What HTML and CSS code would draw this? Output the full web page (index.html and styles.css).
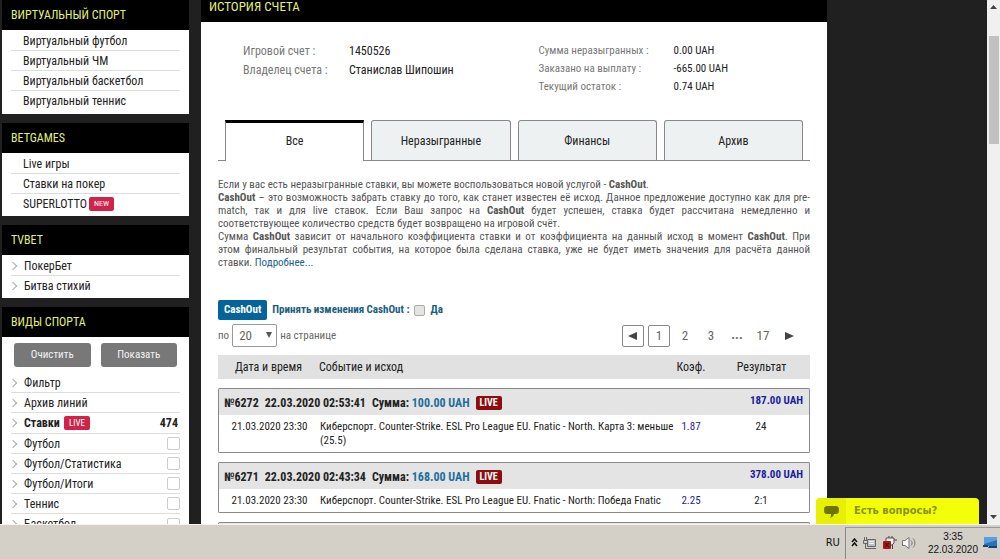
FILE: index.html
```html
<!DOCTYPE html>
<html lang="ru">
<head>
<meta charset="utf-8">
<title>История счета</title>
<link rel="stylesheet" href="styles.css">
</head>
<body>
<div class="browser">
  <div class="page">
    <nav class="sidebar">
      <section class="block">
        <h2 class="block-title">ВИРТУАЛЬНЫЙ СПОРТ</h2>
        <ul class="menu">
          <li><a href="#">Виртуальный футбол</a></li>
          <li><a href="#">Виртуальный ЧМ</a></li>
          <li><a href="#">Виртуальный баскетбол</a></li>
          <li><a href="#">Виртуальный теннис</a></li>
        </ul>
      </section>
      <section class="block">
        <h2 class="block-title">BETGAMES</h2>
        <ul class="menu">
          <li><a href="#">Live игры</a></li>
          <li><a href="#">Ставки на покер</a></li>
          <li><a href="#">SUPERLOTTO</a><span class="tag tag-new">NEW</span></li>
        </ul>
      </section>
      <section class="block">
        <h2 class="block-title">TVBET</h2>
        <ul class="menu arrows">
          <li><a href="#">ПокерБет</a></li>
          <li><a href="#">Битва стихий</a></li>
        </ul>
      </section>
      <section class="block">
        <h2 class="block-title">ВИДЫ СПОРТА</h2>
        <div class="buttons">
          <button type="button">Очистить</button>
          <button type="button">Показать</button>
        </div>
        <ul class="menu arrows">
          <li><a href="#">Фильтр</a></li>
          <li><a href="#">Архив линий</a></li>
          <li class="strong"><a href="#">Ставки</a><span class="tag">LIVE</span><span class="count">474</span></li>
          <li><label for="s1">Футбол</label><input type="checkbox" id="s1"></li>
          <li><label for="s2">Футбол/Статистика</label><input type="checkbox" id="s2"></li>
          <li><label for="s3">Футбол/Итоги</label><input type="checkbox" id="s3"></li>
          <li><label for="s4">Теннис</label><input type="checkbox" id="s4"></li>
          <li><label for="s5">Баскетбол</label><input type="checkbox" id="s5"></li>
        </ul>
      </section>
    </nav>

    <main class="content">
      <h1 class="title">ИСТОРИЯ СЧЕТА</h1>
      <div class="inner">
        <div class="account">
          <dl class="info owner">
            <dt>Игровой счет :</dt><dd>1450526</dd>
            <dt>Владелец счета :</dt><dd>Станислав Шипошин</dd>
          </dl>
          <dl class="info sums">
            <dt>Сумма неразыгранных :</dt><dd>0.00 UAH</dd>
            <dt>Заказано на выплату :</dt><dd>-665.00 UAH</dd>
            <dt>Текущий остаток :</dt><dd>0.74 UAH</dd>
          </dl>
        </div>
        <div class="tabs">
          <button type="button" class="tab active">Все</button>
          <button type="button" class="tab">Неразыгранные</button>
          <button type="button" class="tab">Финансы</button>
          <button type="button" class="tab">Архив</button>
        </div>
        <div class="note">
          <p>Если у вас есть неразыгранные ставки, вы можете воспользоваться новой услугой - <b>CashOut</b>.</p>
          <p><b>CashOut</b> – это возможность забрать ставку до того, как станет известен её исход. Данное предложение доступно как для pre-match, так и для live ставок. Если Ваш запрос на <b>CashOut</b> будет успешен, ставка будет рассчитана немедленно и соответствующее количество средств будет возвращено на игровой счёт.</p>
          <p>Сумма <b>CashOut</b> зависит от начального коэффициента ставки и от коэффициента на данный исход в момент <b>CashOut</b>. При этом&nbsp;финальный результат события, на которое была сделана ставка, уже не будет иметь значения для расчёта данной ставки.&nbsp;<a href="#">Подробнее...</a></p>
        </div>
        <div class="cashout">
          <button type="button" class="cash-btn">CashOut</button>
          <span>Принять изменения CashOut :</span>
          <input type="checkbox" id="yes"><label for="yes">Да</label>
        </div>
        <div class="pager">
          <div class="per-page">
            <label for="per">по</label>
            <span class="select"><select id="per"><option>20</option></select></span>
            <span>на странице</span>
          </div>
          <div class="pages">
            <button type="button" class="boxed" aria-label="Назад"><svg width="10" height="8" viewBox="0 0 10 8"><path d="M9 0v8L0 4z"/></svg></button>
            <button type="button" class="boxed">1</button>
            <button type="button">2</button>
            <button type="button">3</button>
            <b>...</b>
            <button type="button">17</button>
            <button type="button" aria-label="Вперед"><svg width="10" height="8" viewBox="0 0 10 8"><path d="M1 0v8l9-4z"/></svg></button>
          </div>
        </div>
        <table class="bets">
          <colgroup><col class="c-date"><col><col class="c-coef"><col class="c-res"></colgroup>
          <thead>
            <tr><th>Дата и время</th><th>Событие и исход</th><th>Коэф.</th><th>Результат</th></tr>
          </thead>
          <tbody>
            <tr class="gap"><td colspan="4"></td></tr>
            <tr class="head"><td colspan="4"><div class="head-row"><b>№6272</b><b>22.03.2020 02:53:41</b><b>Сумма: <span class="sum">100.00 UAH</span></b><span class="live">LIVE</span><b class="win">187.00 UAH</b></div></td></tr>
            <tr class="data"><td>21.03.2020 23:30</td><td>Киберспорт. Counter-Strike. ESL Pro League EU. Fnatic - North. Карта 3: меньше (25.5)</td><td>1.87</td><td>24</td></tr>
          </tbody>
          <tbody>
            <tr class="gap"><td colspan="4"></td></tr>
            <tr class="head"><td colspan="4"><div class="head-row"><b>№6271</b><b>22.03.2020 02:43:34</b><b>Сумма: <span class="sum">168.00 UAH</span></b><span class="live">LIVE</span><b class="win">378.00 UAH</b></div></td></tr>
            <tr class="data"><td>21.03.2020 23:30</td><td>Киберспорт. Counter-Strike. ESL Pro League EU. Fnatic - North: Победа Fnatic</td><td>2.25</td><td>2:1</td></tr>
          </tbody>
          <tbody>
            <tr class="gap"><td colspan="4"></td></tr>
            <tr class="head"><td colspan="4"></td></tr>
          </tbody>
        </table>
      </div>
    </main>
  </div>
  <div class="scrollbar">
    <svg width="7" height="4" viewBox="0 0 7 4"><path d="M0 4h7L3.500 0z"/></svg>
    <div class="thumb"></div>
    <svg width="7" height="4" viewBox="0 0 7 4"><path d="M0 0h7L3.500 4z"/></svg>
  </div>
  <button type="button" class="chat">
    <span class="chat-icon"><svg width="15" height="13" viewBox="0 0 15 13"><path d="M3 1h9c2 0 3 1 3 4s-1 4-3 4h-2c0 2-2 3-4 4 1-1 1-3 1-4H3C1 9 0 8 0 5s1-4 3-4z"/></svg></span>
    <span>Есть вопросы?</span>
  </button>
</div>
<footer class="taskbar">
  <span class="lang">RU</span>
  <div class="tray">
    <svg width="7" height="9" viewBox="0 0 7 9" fill="none" stroke="#111" stroke-width="1.500"><path d="M1 4l2.500-3L6 4M1 8l2.500-3L6 8"/></svg>
    <svg width="14" height="14" viewBox="0 0 14 14" fill="none" stroke="#666"><path d="M4.500 3.500h8v7h-8z" fill="#b9bebe"/><path d="M5 12.500h8M1.500 1v3M3.500 1v3M.5 4.500h4v3h-4zM2.500 8v4.500H5"/><path d="M6 5.500h5M6 7.500h5" stroke="#f4f4f4"/></svg>
    <svg width="15" height="14" viewBox="0 0 15 14" fill="none"><path d="M4 2h8v5l-2 2H5L4 7z" fill="#eee" stroke="#555"/><path d="M7 0v2M10 0v2M12 4h3M10.500 9v4" stroke="#444"/><rect x="1" y="5" width="8" height="8" rx="1" fill="#b41414"/><path d="M3 7l4 4M7 7l-4 4" stroke="#421" stroke-width="1.500"/></svg>
    <svg width="15" height="14" viewBox="0 0 15 14" fill="none" stroke="#777"><path d="M.5 4.500H3l4-3v11l-4-3H.5z" fill="#f5f5f5"/><path d="M9 4.500c1.500 1.500 1.500 3.500 0 5M11 2.500c2.500 2.500 2.500 6.500 0 9"/></svg>
    <div class="clock"><span>3:35</span><span>22.03.2020</span></div>
    <svg width="14" height="13" viewBox="0 0 14 13"><path d="M1 1h13v9H1z" fill="#2a72b8"/><path d="M1 1h13v3L1 8z" fill="#5b9edb"/><path d="M6 10h8v2H5zM0 9h5v2H0z" fill="#174477"/></svg>
  </div>
</footer>
</body>
</html>
```
FILE: styles.css
```css
* { box-sizing: border-box; }
body {
  margin: 0;
  height: 100vh;
  overflow: hidden;
  display: flex;
  flex-direction: column;
  background: #202020;
  font: 12px/20px "Roboto Condensed", Roboto, "Liberation Sans", sans-serif;
  color: #222;
}
h1, h2, ul, dl, dd, p { margin: 0; padding: 0; }
ul { list-style: none; }
button, input, select { font: inherit; color: inherit; margin: 0; padding: 0; }
a { color: inherit; text-decoration: none; }

.browser { position: relative; flex: 1; min-height: 0; display: flex; }
.page {
  flex: 1;
  min-width: 0;
  overflow: hidden;
  display: grid;
  grid-template-columns: 187px minmax(0, 1fr);
  column-gap: 12px;
  padding: 0 16% 0 2px;
  align-items: start;
}

.sidebar { display: flex; flex-direction: column; gap: 9px; }
.block { background: #fff; padding-bottom: 2px; }
.block:first-child { padding-bottom: 3px; }
.block-title {
  background: #000;
  color: #e3ef7c;
  font-size: 12px;
  font-weight: 400;
  line-height: 30px;
  padding-left: 9px;
}
.menu { padding: 1px 9px 0; }
.menu li {
  display: flex;
  align-items: center;
  height: 20px;
  padding-left: 12px;
  border-bottom: 1px solid #ddd;
}
.menu li:last-child { border-bottom: 0; }
.arrows li { padding-left: 0; }
.arrows li::before {
  content: "";
  width: 5px;
  height: 5px;
  margin-right: 8px;
  border: solid #aaa;
  border-width: 1px 1px 0 0;
  transform: rotate(45deg);
  margin-left: -1px;
}
.menu .strong { font-weight: 700; height: 21px; }
.menu input {
  appearance: none;
  width: 13px;
  height: 13px;
  margin-left: auto;
  border: 1px solid #ccc;
  border-radius: 2px;
  background: #fff;
}
.tag {
  margin-left: 4px;
  padding: 0 5px;
  border-radius: 2px;
  background: #ce2449;
  color: #fff;
  font-size: 9px;
  font-weight: 400;
  line-height: 14px;
}
.tag-new { margin-left: 2px; font-size: 8px; }
.count { margin-left: auto; padding-right: 2px; }
.buttons { display: grid; grid-template-columns: 1fr 1fr; gap: 10px; padding: 6px 12px 5px; }
.buttons button {
  height: 24px;
  border: 0;
  border-radius: 3px;
  background: #787878;
  color: #f2f2f2;
  font-size: 11px;
}

.content { background: #fff; min-height: 100vh; }
.title {
  background: #000;
  color: #e3ef7c;
  font-size: 13px;
  font-weight: 400;
  line-height: 14px;
  padding: 0 8px 8px;
}
.inner { padding: 20px 17px 0; }
.account { display: grid; grid-template-columns: 1fr 1fr; padding-left: 25px; min-height: 78px; align-items: start; }
.info { display: grid; line-height: 18px; }
.owner { grid-template-columns: 106px 1fr; line-height: 19px; }
.sums { grid-template-columns: 135px 1fr; margin-left: 12px; font-size: 11px; }
.info dt { color: #777; }

.tabs {
  display: grid;
  grid-template-columns: repeat(4, 1fr);
  gap: 7px;
  padding: 0 7px;
  border-bottom: 1px solid #888;
}
.tab {
  height: 40px;
  border: 1px solid #888;
  border-bottom: 0;
  border-radius: 3px 3px 0 0;
  background: #eef1f1;
}
.tab.active {
  height: 41px;
  margin-bottom: -1px;
  padding-bottom: 2px;
  background: #fff;
  border-top: 3px solid #000;
  border-radius: 0;
}

.note { padding-top: 17px; font-size: 11px; line-height: 13px; color: #555; text-align: justify; }
.note a { color: #1a6389; }
.cashout { display: flex; align-items: center; gap: 5px; margin-top: 31px; color: #17607f; font-size: 11px; font-weight: 700; }
.cash-btn { height: 20px; padding: 0 6px; border: 0; border-radius: 2px; background: #05639b; color: #fff; }
.cashout input {
  appearance: none;
  width: 11px;
  height: 11px;
  border: 1px solid #aaa;
  border-radius: 2px;
  background: #e4e4e4;
}

.pager { display: flex; justify-content: space-between; align-items: center; margin-top: 4px; font-size: 11px; color: #666; }
.per-page { display: flex; align-items: center; gap: 3px; }
.select { position: relative; }
.select::after {
  content: "";
  position: absolute;
  right: 5px;
  top: 8px;
  border: solid transparent;
  border-width: 6px 3px 0;
  border-top-color: #555;
}
.select select {
  appearance: none;
  display: block;
  width: 45px;
  height: 23px;
  padding-left: 6px;
  border: 1px solid #999;
  border-radius: 2px;
  background: #fff;
  font-size: 13px;
}
.pages { display: flex; gap: 4px; padding-right: 10px; font-size: 13px; }
.pages > * { width: 22px; height: 22px; border: 0; background: none; text-align: center; }
.pages .boxed { border: 1px solid #888; border-radius: 2px; }
.pages svg { fill: #444; }

.bets { width: 100%; margin-top: 8px; border-spacing: 0; table-layout: fixed; font-size: 11px; line-height: 14px; }
.c-date { width: 94px; }
.c-coef { width: 34px; }
.c-res { width: 102px; }
.bets td { padding: 0; }
.bets th { height: 24px; padding: 0; background: #e1e1e1; font-size: 12px; font-weight: 400; }
.bets th:nth-child(1) { text-align: right; padding-right: 10px; }
.bets th:nth-child(2) { text-align: left; padding-left: 7px; }
.bets th:nth-child(4) { padding-left: 5px; }
.bets .gap td { height: 9px; }
.bets .head td {
  height: 27px;
  background: #e4e4e4;
  border: 1px solid #888;
  border-bottom: 0;
  border-radius: 2px 2px 0 0;
}
.head-row { display: flex; align-items: center; gap: 6px; padding: 2px 6px 0 5px; font-size: 12px; }
.head-row .sum { color: #1d6f9c; }
.head-row .win { margin-left: auto; padding-bottom: 4px; color: #1c1ca0; font-size: 11px; }
.live { padding: 0 4px; border-radius: 2px; background: #8c0d10; color: #fff; font-size: 10px; font-weight: 700; line-height: 14px; }
.bets .data td { padding: 5px 0 4px; border-bottom: 1px solid #888; text-align: center; vertical-align: top; }
.bets .data td:nth-child(1) { border-left: 1px solid #888; padding-left: 8px; border-bottom-left-radius: 2px; }
.bets .data td:nth-child(2) { text-align: left; padding-left: 8px; }
.bets .data td:nth-child(3) { color: #1c1ca0; }
.bets .data td:nth-child(4) { border-right: 1px solid #888; border-bottom-right-radius: 2px; padding-left: 5px; }

.scrollbar {
  width: 13px;
  background: #f0f0f0;
  display: flex;
  flex-direction: column;
  align-items: center;
  padding: 5px 0;
}
.scrollbar svg { fill: #444; flex: none; }
.thumb { width: 10px; height: 21%; margin: 27px 0 auto; background: #c1c1c1; }

.chat {
  position: absolute;
  right: 21px;
  bottom: 0;
  display: flex;
  align-items: center;
  width: 163px;
  height: 26px;
  border: 0;
  border-radius: 4px 4px 0 0;
  background: #f2ff08;
  color: #8a9106;
  font: 700 10px/26px "DejaVu Sans", sans-serif;
  overflow: hidden;
}
.chat-icon { display: flex; align-items: center; justify-content: center; width: 30px; height: 26px; margin-right: 8px; background: #e6f000; }
.chat-icon svg { fill: #6f7500; }

.taskbar {
  flex: none;
  height: 35px;
  display: flex;
  justify-content: flex-end;
  background: #d4d0c8;
  border-top: 1px solid #f5f4ee;
  font: 10px/13px "DejaVu Sans", sans-serif;
  color: #111;
}
.lang { align-self: center; padding-right: 5px; }
.tray {
  display: flex;
  align-items: center;
  gap: 5px;
  padding: 0 3px 2px 5px;
  margin-top: 2px;
  border-left: 1px solid #888;
  border-top: 1px solid #999;
}
.clock { display: flex; flex-direction: column; align-items: center; margin-left: 6px; font-family: "Liberation Sans", sans-serif; }
```
